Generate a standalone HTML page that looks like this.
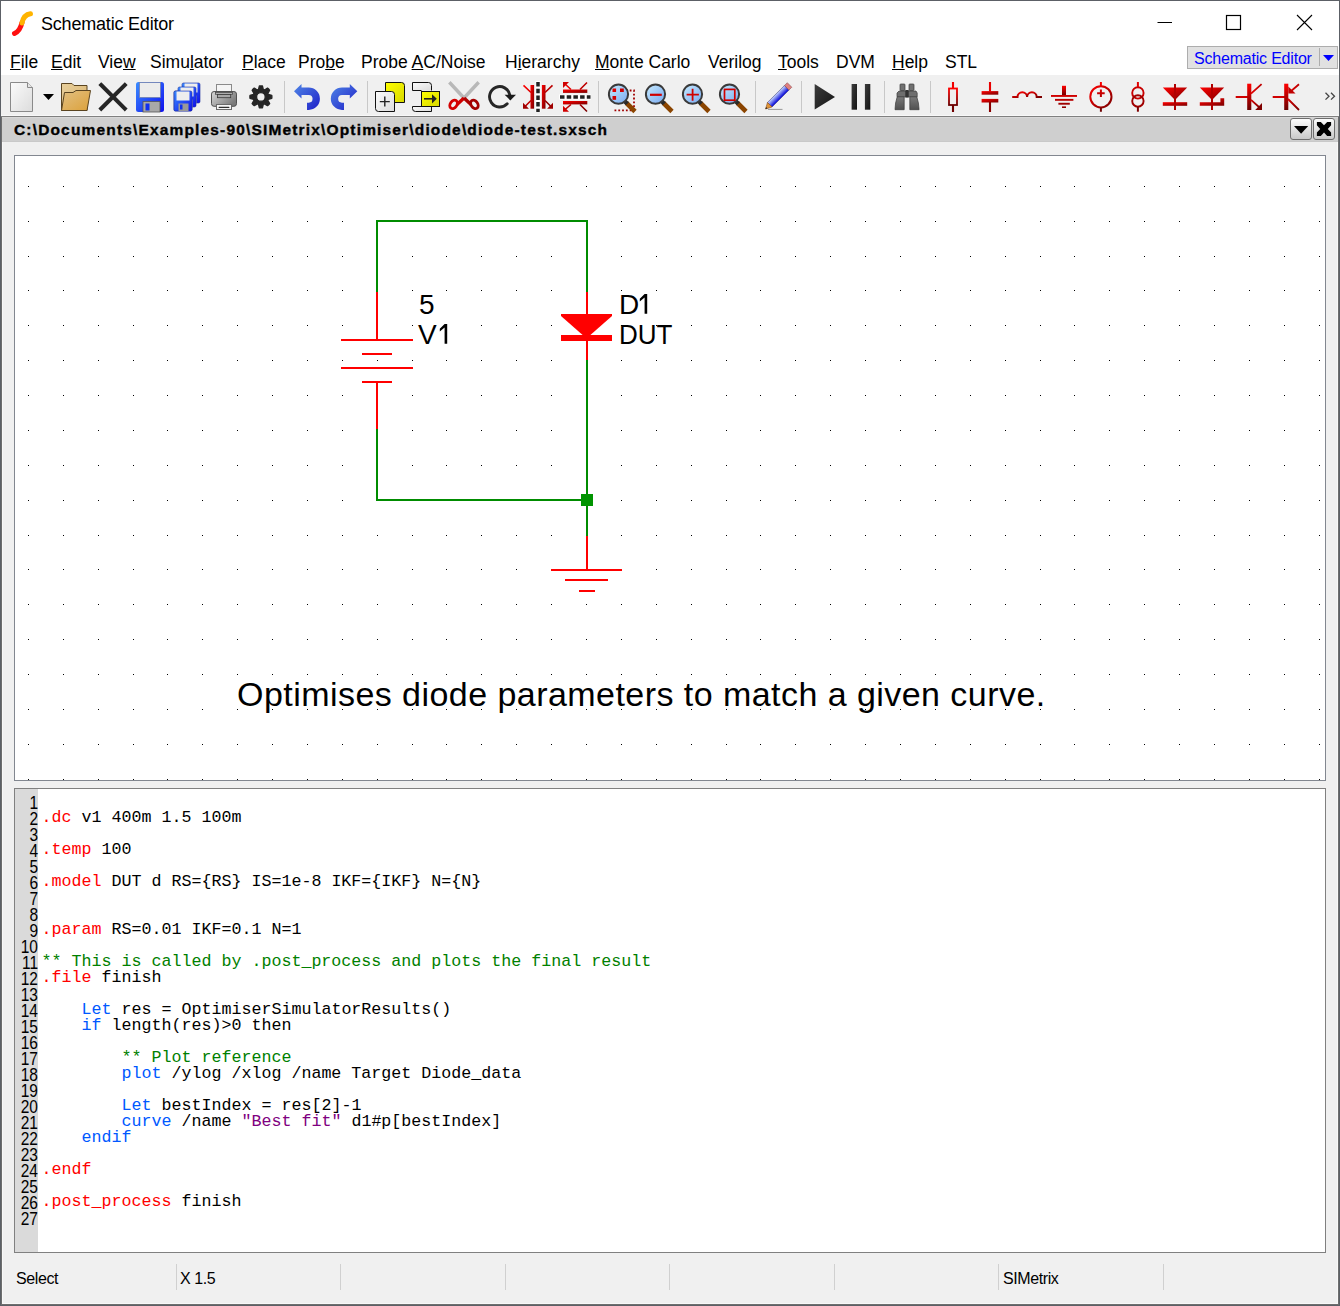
<!DOCTYPE html>
<html><head><meta charset="utf-8">
<style>
*{margin:0;padding:0;box-sizing:border-box}
html,body{width:1340px;height:1306px;overflow:hidden;background:#f0f0f0;font-family:"Liberation Sans",sans-serif;color:#000}
.abs{position:absolute}
#win{position:absolute;left:0;top:0;width:1340px;height:1306px;border:1px solid #5c6066}
#titlebar{left:1px;top:1px;width:1338px;height:74px;background:#fff}
.title{left:41px;top:13.5px;font-size:18px;letter-spacing:-0.2px;white-space:nowrap}
.menu{top:52px;font-size:17.5px;white-space:nowrap}
.menu u{text-decoration:underline;text-underline-offset:1px;text-decoration-thickness:1px}
#toolbar{left:1px;top:75px;width:1338px;height:40px;background:#f0f0f0}
#doctitle{left:2px;top:117px;width:1336px;height:25px;background:#cfcfcf;box-shadow:inset 0 1px 0 #d8d8d8, inset 0 -1px 0 #c9c9c9}
.px{position:absolute}
.dt{left:14px;top:120.5px;font-size:15.5px;letter-spacing:1.16px;font-weight:bold;-webkit-text-stroke:0.35px #000;white-space:nowrap}
#sch{left:14px;top:155px;width:1312px;height:626px;border:1px solid #828790;background:#fff}
#code{left:14px;top:788px;width:1312px;height:465px;border:1px solid #808080;background:#fff}
#gutter{left:15px;top:789px;width:23px;height:463px;background:#dadada}
.ln{position:absolute;left:15px;width:23px;text-align:right;font-size:15.5px;line-height:16px;transform:scaleY(1.2);transform-origin:0 100%}
.cl{position:absolute;left:41.5px;font-family:"Liberation Mono",monospace;font-size:16.67px;line-height:16px;white-space:pre}
.r{color:#ff0000}.b{color:#0058ff}.g{color:#008000}.p{color:#800080}
.st{top:1270px;font-size:16px;letter-spacing:-0.4px;white-space:nowrap}
.sep{position:absolute;top:1264px;width:1px;height:26px;background:#d0d0d0}
</style></head><body>
<div id="win"></div>
<div id="titlebar" class="abs"></div>
<svg class="abs" style="left:11.3px;top:7px" width="24" height="30" viewBox="0 0 24 30">
<path d="M3.5 26.5 C8 24.5 10 20 11 15.5" stroke="#ff1010" stroke-width="5" fill="none" stroke-linecap="round"/>
<path d="M11 16 C12 11 14 7.5 19.5 6.8" stroke="#ffb400" stroke-width="5" fill="none" stroke-linecap="round"/>
</svg>
<div class="abs title">Schematic Editor</div>
<svg class="abs" style="left:1140px;top:0" width="200" height="45">
<path d="M17.5 22.5h14.5" stroke="#000" stroke-width="1"/>
<rect x="86.5" y="15.5" width="14" height="14" stroke="#000" fill="none" stroke-width="1.2"/>
<path d="M157 15L172 30M172 15L157 30" stroke="#000" stroke-width="1.1"/>
</svg>
<div class="abs menu" style="left:10px"><u>F</u>ile</div>
<div class="abs menu" style="left:51px"><u>E</u>dit</div>
<div class="abs menu" style="left:98px">Vie<u>w</u></div>
<div class="abs menu" style="left:150px">Simu<u>l</u>ator</div>
<div class="abs menu" style="left:242px"><u>P</u>lace</div>
<div class="abs menu" style="left:298px">Pro<u>b</u>e</div>
<div class="abs menu" style="left:361px">Probe <u>A</u>C/Noise</div>
<div class="abs menu" style="left:505px">H<u>i</u>erarchy</div>
<div class="abs menu" style="left:595px"><u>M</u>onte Carlo</div>
<div class="abs menu" style="left:708px">Verilog</div>
<div class="abs menu" style="left:778px"><u>T</u>ools</div>
<div class="abs menu" style="left:836px">DVM</div>
<div class="abs menu" style="left:892px"><u>H</u>elp</div>
<div class="abs menu" style="left:945px">STL</div>
<div class="abs" style="left:1187px;top:46px;width:151px;height:23px;background:#e1e1e1;border:1px solid #adadad"></div>
<div class="abs" style="left:1194px;top:50px;font-size:16px;letter-spacing:-0.2px;color:#0000ff;white-space:nowrap">Schematic Editor</div>
<div class="abs" style="left:1319px;top:48px;width:1px;height:18px;background:#adadad"></div>
<svg class="abs" style="left:1322px;top:54px" width="14" height="9"><path d="M1 1h11l-5.5 6z" fill="#0000ff"/></svg>
<div id="toolbar" class="abs"></div>
<svg class="abs" style="left:0;top:76px" width="1340" height="40" viewBox="0 76 1340 40">
<defs>
<linearGradient id="gDoc" x1="0" y1="0" x2="1" y2="1"><stop offset="0" stop-color="#fbfbfb"/><stop offset="1" stop-color="#dcdcdc"/></linearGradient>
<linearGradient id="gFold" x1="0" y1="0" x2="1" y2="1"><stop offset="0" stop-color="#e8cf9c"/><stop offset="1" stop-color="#d9b46e"/></linearGradient>
<linearGradient id="gFoldF" x1="0" y1="0" x2="1" y2="1"><stop offset="0" stop-color="#e2c083"/><stop offset="1" stop-color="#dca13a"/></linearGradient>
<linearGradient id="gBlue" x1="0" y1="0" x2="1" y2="1"><stop offset="0" stop-color="#3a8dff"/><stop offset="1" stop-color="#1010ee"/></linearGradient>
<linearGradient id="gArrow" x1="0" y1="0" x2="1" y2="1"><stop offset="0" stop-color="#4f86e6"/><stop offset="1" stop-color="#1f1fc8"/></linearGradient>
<linearGradient id="gRed" x1="0" y1="0" x2="1" y2="1"><stop offset="0" stop-color="#ff0000"/><stop offset="1" stop-color="#7a0000"/></linearGradient>
<linearGradient id="gRedV" x1="0" y1="0" x2="0" y2="1"><stop offset="0" stop-color="#ff0000"/><stop offset="1" stop-color="#6a0000"/></linearGradient>
<linearGradient id="gLens" x1="0" y1="0" x2="1" y2="1"><stop offset="0" stop-color="#c8ecff"/><stop offset="1" stop-color="#78a8f0"/></linearGradient>
<linearGradient id="gGray" x1="0" y1="0" x2="1" y2="1"><stop offset="0" stop-color="#d0d0d0"/><stop offset="1" stop-color="#808080"/></linearGradient>
<linearGradient id="gYel" x1="0" y1="0" x2="1" y2="1"><stop offset="0" stop-color="#ffff00"/><stop offset="1" stop-color="#d8d800"/></linearGradient>
<linearGradient id="gPenBody" x1="0" y1="0" x2="0" y2="1"><stop offset="0" stop-color="#c8d8ff"/><stop offset="1" stop-color="#0000d8"/></linearGradient>
<linearGradient id="gDark" x1="0" y1="0" x2="1" y2="1"><stop offset="0" stop-color="#3c3c3c"/><stop offset="1" stop-color="#141414"/></linearGradient>
<linearGradient id="gBino" x1="0" y1="0" x2="0" y2="1"><stop offset="0" stop-color="#7a7a7a"/><stop offset="1" stop-color="#505050"/></linearGradient>
</defs>
<!-- new doc -->
<path d="M10.5 82.5H27.5L32.5 87.5V111.5H10.5Z" fill="url(#gDoc)" stroke="#8a8a8a" stroke-width="1"/>
<path d="M27.5 82.5V87.5H32.5" fill="#e6e6e6" stroke="#8a8a8a" stroke-width="1"/>
<path d="M43 94H54L48.5 100Z" fill="#000"/>
<!-- folder -->
<path d="M61.5 110.5V83.5H72L74 85.5H87V110.5Z" fill="url(#gFold)" stroke="#5a4420" stroke-width="1"/>
<path d="M61.5 110.5L64.5 92.5H73L76 90.5H90.5L87 110.5Z" fill="url(#gFoldF)" stroke="#5a4420" stroke-width="1"/>
<!-- X -->
<path d="M101.2 85L124.8 108.6M124.8 85L101.2 108.6" stroke="#262626" stroke-width="4" stroke-linecap="square"/>
<!-- save -->
<rect x="136" y="82" width="28" height="30" rx="2.5" fill="url(#gBlue)"/>
<rect x="139.5" y="82.5" width="21" height="15" fill="#ececec" stroke="#6f7fb0" stroke-width="0.8"/>
<rect x="143" y="101.5" width="17" height="10.5" fill="#a8a8a8" stroke="#555" stroke-width="0.8"/>
<rect x="145.5" y="103.5" width="4" height="7" fill="#1030f0"/>
<!-- save all -->
<g id="fl"><rect x="174" y="91" width="18" height="20" rx="1.5" fill="url(#gBlue)" stroke="#2030a0" stroke-width="0.6"/><rect x="176.5" y="91.5" width="13" height="9" fill="#eee"/><rect x="178.5" y="103.5" width="10" height="7.5" fill="#999"/><rect x="180" y="104.5" width="2.5" height="5" fill="#1030f0"/></g>
<use href="#fl" x="8" y="-8"/><use href="#fl" x="4" y="-4"/><use href="#fl"/>
<!-- printer -->
<linearGradient id="gPrn" x1="0" y1="0" x2="1" y2="0.6"><stop offset="0" stop-color="#d8d8d8"/><stop offset="1" stop-color="#7a7a7a"/></linearGradient>
<rect x="216.5" y="84.5" width="15" height="8" fill="#f4f4f4" stroke="#8a8a8a" stroke-width="1"/>
<rect x="211.5" y="91.5" width="25" height="14.8" rx="2.6" fill="url(#gPrn)" stroke="#505050" stroke-width="1"/>
<rect x="215.5" y="92.5" width="17" height="1.8" fill="#b8b8b8" stroke="#4a4a4a" stroke-width="0.8"/>
<rect x="217.5" y="94.5" width="13.2" height="3.2" fill="#a8a8a8" stroke="#3a3a3a" stroke-width="0.8"/>
<rect x="216.5" y="104.5" width="15" height="5" fill="#f6f6f6" stroke="#6a6a6a" stroke-width="1"/>
<rect x="218.6" y="106.7" width="10.8" height="1.3" rx="0.6" fill="#2e2e2e"/>
<!-- gear -->
<path d="M258.49 89.48L259.37 86.01A11.0 11.0 0 0 1 262.43 86.01L263.31 89.48A7.8 7.8 0 0 1 264.44 89.95L267.52 88.12A11.0 11.0 0 0 1 269.68 90.28L267.85 93.36A7.8 7.8 0 0 1 268.32 94.49L271.79 95.37A11.0 11.0 0 0 1 271.79 98.43L268.32 99.31A7.8 7.8 0 0 1 267.85 100.44L269.68 103.52A11.0 11.0 0 0 1 267.52 105.68L264.44 103.85A7.8 7.8 0 0 1 263.31 104.32L262.43 107.79A11.0 11.0 0 0 1 259.37 107.79L258.49 104.32A7.8 7.8 0 0 1 257.36 103.85L254.28 105.68A11.0 11.0 0 0 1 252.12 103.52L253.95 100.44A7.8 7.8 0 0 1 253.48 99.31L250.01 98.43A11.0 11.0 0 0 1 250.01 95.37L253.48 94.49A7.8 7.8 0 0 1 253.95 93.36L252.12 90.28A11.0 11.0 0 0 1 254.28 88.12L257.36 89.95A7.8 7.8 0 0 1 258.49 89.48ZM265.20 96.9A4.3 4.3 0 1 0 256.60 96.9A4.3 4.3 0 1 0 265.20 96.9Z" fill="#262626" fill-rule="evenodd" stroke="#262626" stroke-width="1.3" stroke-linejoin="round"/>
<rect x="284" y="81" width="1" height="32" fill="#c8c8c8"/>
<!-- undo redo -->
<path d="M294 91.2L301.5 84V87.5H308.7A11.2 11.2 0 0 1 308.7 109.9H307V102.7H308.7A3.85 3.85 0 0 0 308.7 95H301.5V98.4Z" fill="url(#gArrow)"/>
<path d="M357.3 91.2L349.8 84V87.5H342A11.2 11.2 0 0 0 342 109.9H344V102.7H342A3.85 3.85 0 0 1 342 95H349.8V98.4Z" fill="url(#gArrow)"/>
<rect x="367" y="81" width="1" height="32" fill="#c8c8c8"/>
<!-- add symbol -->
<path d="M385.5 82.5H401.5A3 3 0 0 1 404.5 85.5V102.5H385.5Z" fill="url(#gYel)" stroke="#111" stroke-width="1"/>
<path d="M375.5 91.5H391.5A3 3 0 0 1 394.5 94.5V111.5H378.5A3 3 0 0 1 375.5 108.5Z" fill="url(#gDoc)" stroke="#111" stroke-width="1"/>
<path d="M379.8 101.6H389.8M384.8 96.6V106.6" stroke="#222" stroke-width="1.4"/>
<!-- place/goto -->
<path d="M412.5 90.5V82.5H428.5A3 3 0 0 1 431.5 85.5V90.5" fill="url(#gDoc)" stroke="#111" stroke-width="1"/>
<path d="M412.5 90.5H421.5" stroke="#111" stroke-width="1"/>
<path d="M412.5 106.5V108.5A3 3 0 0 0 415.5 111.5H431.5V106.5Z" fill="url(#gDoc)" stroke="#111" stroke-width="1"/>
<rect x="421.5" y="91.5" width="18" height="15" fill="url(#gYel)" stroke="#111" stroke-width="1"/>
<path d="M424 98.8H433" stroke="#222" stroke-width="1.6"/>
<path d="M432 94.2L436.8 98.8L432 103.5Z" fill="#222"/>
<!-- scissors -->
<path d="M450.5 83.5L464 98M477.5 83.5L464 98" stroke="#b8b8b8" stroke-width="3.4" stroke-linecap="square"/>
<path d="M464 98L457 104.5" stroke="#d00000" stroke-width="3.4"/>
<path d="M464 98L471 104.5" stroke="#b00000" stroke-width="3.4"/>
<ellipse cx="453.6" cy="104.4" rx="3.3" ry="4.6" transform="rotate(35 453.6 104.4)" fill="none" stroke="#d40000" stroke-width="2.9"/>
<ellipse cx="474.4" cy="104.4" rx="3.3" ry="4.6" transform="rotate(-35 474.4 104.4)" fill="none" stroke="#a40000" stroke-width="2.9"/>
<!-- rotate -->
<path d="M507.2 103.8A10.2 10.2 0 1 1 509.8 95" fill="none" stroke="#262626" stroke-width="2.9" stroke-linecap="round"/>
<path d="M504.6 94.8L516 94.8L510.3 100.4Z" fill="#1a1a1a"/>
<!-- mirror LR -->
<rect x="535.5" y="81" width="5" height="31" fill="#fff"/>
<path d="M538 82V112" stroke="#222" stroke-width="3.5" stroke-dasharray="4.5 2.2"/>
<rect x="530.5" y="85" width="3.6" height="23.7" fill="url(#gRed)"/>
<rect x="541.9" y="85" width="3.6" height="23.7" fill="url(#gRed)"/>
<path d="M523.5 85.3L531 92.5M531 100.5L524.5 107M552.5 85.3L545 92.5M545 100.5L551.5 107" stroke="url(#gRed)" stroke-width="1.6"/>
<path d="M523 102.8V108.7H528.9L527 106.8L525 104.8Z M553 102.8V108.7H547.1L549 106.8L551 104.8Z" fill="#a00000"/>
<!-- mirror UD -->
<rect x="559" y="94.5" width="32" height="5" fill="#fff"/>
<path d="M560 97.1H590.5" stroke="#222" stroke-width="3.5" stroke-dasharray="4.5 2.2"/>
<rect x="563" y="89.5" width="24.3" height="3.4" fill="url(#gRed)"/>
<rect x="563" y="101" width="24.3" height="3.4" fill="url(#gRed)"/>
<path d="M564.5 83.5L571 89.5M587 82.5L580 89.5M564.5 110L571 104.5M587 111.5L580 104.5" stroke="url(#gRed)" stroke-width="1.6"/>
<path d="M563 82H569L567 84L565 86L563 88Z M563 111.7H569L567 109.7L565 107.7L563 105.7Z" fill="#d00000"/>
<rect x="598" y="81" width="1" height="32" fill="#c8c8c8"/>
<!-- zoom fit -->
<path d="M614.5 90.5H634V110.3H614.3" fill="none" stroke="#a00000" stroke-width="1.8" stroke-dasharray="1.8 2"/>
<g id="lens"><path d="M626.5 103L635 111.5" stroke="#8b4500" stroke-width="4.6" stroke-linecap="butt"/><path d="M624.5 101L627.3 103.8" stroke="#2a2a2a" stroke-width="4.4"/><circle cx="618.5" cy="94.2" r="9.6" fill="url(#gLens)" stroke="#3a3a3a" stroke-width="2"/></g>
<rect x="612.5" y="88.5" width="3.6" height="3.5" fill="#e00000"/><rect x="620" y="88.5" width="3.8" height="3.5" fill="#d00000"/><rect x="612.5" y="96" width="3.6" height="3.8" fill="#d00000"/>
<!-- zoom out -->
<use href="#lens" x="37"/>
<path d="M650 94.8H661.8" stroke="#d00000" stroke-width="2.2" stroke-linecap="butt"/>
<use href="#lens" x="74"/>
<path d="M686.6 94.6H698.9M692.6 88.7V100.7" stroke="#d00000" stroke-width="1.8"/>
<use href="#lens" x="111"/>
<rect x="724.5" y="89.4" width="10.3" height="10.8" fill="none" stroke="#d00000" stroke-width="1.7"/>
<rect x="755" y="81" width="1" height="32" fill="#c8c8c8"/>
<!-- pencil -->
<path d="M768 109.4H782.5" stroke="#999" stroke-width="1"/>
<g transform="translate(765.5 109) rotate(-45)">
<rect x="6" y="-3.2" width="24" height="6.4" fill="url(#gPenBody)" stroke="#303070" stroke-width="0.5"/>
<rect x="30" y="-3.2" width="4" height="6.4" fill="#e08080" stroke="#804040" stroke-width="0.5"/>
<path d="M0 0L6 -3.2V3.2Z" fill="#e0953a" stroke="#804010" stroke-width="0.5"/>
<path d="M0 0L1.8 -1V1Z" fill="#222"/>
</g>
<rect x="801" y="81" width="1" height="32" fill="#c8c8c8"/>
<!-- play pause -->
<path d="M814.7 84V109.6L835 97Z" fill="url(#gDark)"/>
<rect x="851.6" y="84" width="5.4" height="25.7" fill="url(#gDark)"/>
<rect x="864.9" y="84" width="5.4" height="25.7" fill="url(#gDark)"/>
<rect x="884" y="81" width="1" height="32" fill="#c8c8c8"/>
<!-- binoculars -->
<rect x="900" y="84" width="5" height="6.5" rx="0.8" fill="#707070" stroke="#3a3a3a" stroke-width="0.7"/>
<rect x="909" y="84" width="5" height="6.5" rx="0.8" fill="#707070" stroke="#3a3a3a" stroke-width="0.7"/>
<path d="M897 96.8V93L899 91H916L917.2 93V96.8Z" fill="#6e6e6e" stroke="#3a3a3a" stroke-width="0.7"/>
<path d="M897.2 96.8H904.2V109.7H895L895.6 103Z" fill="url(#gBino)" stroke="#3a3a3a" stroke-width="0.7"/>
<path d="M909.8 96.8H916.8L918.4 103L919.1 109.7H909.8Z" fill="url(#gBino)" stroke="#3a3a3a" stroke-width="0.7"/>
<rect x="905.3" y="90" width="3.4" height="7.6" rx="0.5" fill="#333"/>
<rect x="930" y="81" width="1" height="32" fill="#c8c8c8"/>
<!-- resistor -->
<path d="M953 82V88" stroke="#f00000" stroke-width="2.1"/><path d="M953 105V112" stroke="#700000" stroke-width="2.1"/>
<rect x="949" y="88.5" width="8" height="16.5" fill="none" stroke="url(#gRedV)" stroke-width="1.8"/>
<!-- cap -->
<path d="M990 82V91.5" stroke="#e80000" stroke-width="2.1"/><path d="M990 102V112" stroke="#880000" stroke-width="2.1"/>
<rect x="981.6" y="91.1" width="16.7" height="3.6" fill="url(#gRed)"/>
<rect x="981.6" y="98.9" width="16.7" height="3.6" fill="url(#gRed)"/>
<!-- inductor -->
<path d="M1012.2 97H1017.5A4.8 4.8 0 0 1 1027.1 97A4.8 4.8 0 0 1 1036.7 97H1042" fill="none" stroke="url(#gRed)" stroke-width="2"/>
<!-- ground -->
<rect x="1062" y="85.8" width="4" height="10" fill="url(#gRedV)"/>
<rect x="1051" y="95" width="26" height="1.9" fill="#d00000"/>
<rect x="1055" y="98.9" width="18.4" height="1.9" fill="#b80000"/>
<rect x="1058.4" y="102.8" width="11.4" height="1.9" fill="#a00000"/>
<rect x="1062" y="106.4" width="4" height="1.6" fill="#900000"/>
<!-- vsource -->
<circle cx="1100.9" cy="96.8" r="10.6" fill="none" stroke="url(#gRed)" stroke-width="2"/>
<path d="M1100.9 82V86.2M1100.9 107.4V111.7M1097.1 93.2H1104.7M1100.9 89.4V97" stroke="url(#gRedV)" stroke-width="2"/>
<!-- isource -->
<circle cx="1137.9" cy="92.9" r="5.7" fill="none" stroke="#c80000" stroke-width="1.9"/>
<circle cx="1137.9" cy="101" r="5.7" fill="none" stroke="#a00000" stroke-width="1.9"/>
<path d="M1137.9 82V87.2" stroke="#e00000" stroke-width="2"/><path d="M1137.9 106.7V111.7" stroke="#800000" stroke-width="2"/>
<!-- diode -->
<path d="M1162.8 87.6H1187.2L1175 100.1Z" fill="url(#gRed)"/>
<rect x="1162.8" y="102.2" width="24.4" height="3.6" fill="url(#gRed)"/>
<path d="M1175 84V110" stroke="#b00000" stroke-width="2"/>
<!-- zener -->
<path d="M1199.8 87.6H1224.2L1212 100.1Z" fill="url(#gRed)"/>
<path d="M1199.8 102.2H1220.4V98.3H1224.2V105.8H1199.8Z" fill="url(#gRed)"/>
<path d="M1212 84V110" stroke="#b00000" stroke-width="2"/>
<!-- npn -->
<path d="M1235.7 97H1248" stroke="#d00000" stroke-width="2"/>
<rect x="1247.2" y="83.7" width="4.1" height="26.3" fill="url(#gRedV)"/>
<path d="M1251 93.6L1261.6 84.2M1251 99.8L1259.5 107.5" stroke="url(#gRed)" stroke-width="1.8"/>
<path d="M1255.2 110H1262V103Z" fill="#800000"/>
<!-- pnp -->
<path d="M1272.7 97H1285" stroke="#d00000" stroke-width="2"/>
<rect x="1284.2" y="83.7" width="4.1" height="26.3" fill="url(#gRedV)"/>
<path d="M1290 92L1299 84.2M1288 99L1299 110" stroke="url(#gRed)" stroke-width="1.8"/>
<path d="M1288.3 93.5H1295.5L1288.3 86.5Z" fill="#c00000"/>
<!-- chevrons -->
<path d="M1325.5 92.8L1329 96.2L1325.5 99.6M1331 92.8L1334.5 96.2L1331 99.6" fill="none" stroke="#444" stroke-width="1.3"/>
</svg>

<div class="px" style="left:1px;top:115px;width:1338px;height:1px;background:#f8f8f8"></div>
<div class="px" style="left:1px;top:116px;width:1338px;height:1px;background:#808080"></div>
<div class="px" style="left:1px;top:117px;width:1px;height:1188px;background:#6e6e6e"></div>
<div class="px" style="left:1338px;top:117px;width:1px;height:1188px;background:#6e6e6e"></div>
<div class="px" style="left:1px;top:1304px;width:1338px;height:1px;background:#6e6e6e"></div>
<div class="px" style="left:2px;top:142px;width:1px;height:1162px;background:#f8f8f8"></div>
<div class="px" style="left:1337px;top:142px;width:1px;height:1162px;background:#f8f8f8"></div>
<div class="px" style="left:2px;top:1303px;width:1336px;height:1px;background:#f8f8f8"></div>
<div id="doctitle" class="abs"></div>
<div class="abs dt">C:\Documents\Examples-90\SIMetrix\Optimiser\diode\diode-test.sxsch</div>
<svg class="abs" style="left:1285px;top:115px" width="55" height="28" viewBox="1285 115 55 28">
<defs><linearGradient id="gBtn" x1="0" y1="0" x2="0" y2="1"><stop offset="0" stop-color="#fdfdfd"/><stop offset="1" stop-color="#c8c8c8"/></linearGradient></defs>
<rect x="1290.5" y="118.5" width="21" height="21" rx="2.5" fill="url(#gBtn)" stroke="#6e6e6e" stroke-width="1"/>
<rect x="1313.5" y="118.5" width="21" height="21" rx="2.5" fill="url(#gBtn)" stroke="#6e6e6e" stroke-width="1"/>
<path d="M1294 126H1308.2L1301.1 133.8Z" fill="#000"/>
<path d="M1316.9 121.9H1320.8L1324 125.2L1327.2 121.9H1331.1V125.2L1327.8 129L1331.1 132.6V136H1327.2L1324 132.6L1320.8 136H1316.9V132.6L1320.2 129L1316.9 125.2Z" fill="#000"/>
</svg>
<div id="sch" class="abs"></div>
<svg class="abs" style="left:15px;top:156px" width="1310" height="624" viewBox="15 156 1310 624" shape-rendering="crispEdges">
<path id="grid" d="M28 186h1v1h-1zM63 186h1v1h-1zM98 186h1v1h-1zM133 186h1v1h-1zM167 186h1v1h-1zM202 186h1v1h-1zM237 186h1v1h-1zM272 186h1v1h-1zM307 186h1v1h-1zM342 186h1v1h-1zM377 186h1v1h-1zM412 186h1v1h-1zM446 186h1v1h-1zM481 186h1v1h-1zM516 186h1v1h-1zM551 186h1v1h-1zM586 186h1v1h-1zM621 186h1v1h-1zM656 186h1v1h-1zM691 186h1v1h-1zM726 186h1v1h-1zM760 186h1v1h-1zM795 186h1v1h-1zM830 186h1v1h-1zM865 186h1v1h-1zM900 186h1v1h-1zM935 186h1v1h-1zM970 186h1v1h-1zM1005 186h1v1h-1zM1040 186h1v1h-1zM1074 186h1v1h-1zM1109 186h1v1h-1zM1144 186h1v1h-1zM1179 186h1v1h-1zM1214 186h1v1h-1zM1249 186h1v1h-1zM1284 186h1v1h-1zM1319 186h1v1h-1zM28 221h1v1h-1zM63 221h1v1h-1zM98 221h1v1h-1zM133 221h1v1h-1zM167 221h1v1h-1zM202 221h1v1h-1zM237 221h1v1h-1zM272 221h1v1h-1zM307 221h1v1h-1zM342 221h1v1h-1zM377 221h1v1h-1zM412 221h1v1h-1zM446 221h1v1h-1zM481 221h1v1h-1zM516 221h1v1h-1zM551 221h1v1h-1zM586 221h1v1h-1zM621 221h1v1h-1zM656 221h1v1h-1zM691 221h1v1h-1zM726 221h1v1h-1zM760 221h1v1h-1zM795 221h1v1h-1zM830 221h1v1h-1zM865 221h1v1h-1zM900 221h1v1h-1zM935 221h1v1h-1zM970 221h1v1h-1zM1005 221h1v1h-1zM1040 221h1v1h-1zM1074 221h1v1h-1zM1109 221h1v1h-1zM1144 221h1v1h-1zM1179 221h1v1h-1zM1214 221h1v1h-1zM1249 221h1v1h-1zM1284 221h1v1h-1zM1319 221h1v1h-1zM28 256h1v1h-1zM63 256h1v1h-1zM98 256h1v1h-1zM133 256h1v1h-1zM167 256h1v1h-1zM202 256h1v1h-1zM237 256h1v1h-1zM272 256h1v1h-1zM307 256h1v1h-1zM342 256h1v1h-1zM377 256h1v1h-1zM412 256h1v1h-1zM446 256h1v1h-1zM481 256h1v1h-1zM516 256h1v1h-1zM551 256h1v1h-1zM586 256h1v1h-1zM621 256h1v1h-1zM656 256h1v1h-1zM691 256h1v1h-1zM726 256h1v1h-1zM760 256h1v1h-1zM795 256h1v1h-1zM830 256h1v1h-1zM865 256h1v1h-1zM900 256h1v1h-1zM935 256h1v1h-1zM970 256h1v1h-1zM1005 256h1v1h-1zM1040 256h1v1h-1zM1074 256h1v1h-1zM1109 256h1v1h-1zM1144 256h1v1h-1zM1179 256h1v1h-1zM1214 256h1v1h-1zM1249 256h1v1h-1zM1284 256h1v1h-1zM1319 256h1v1h-1zM28 290h1v1h-1zM63 290h1v1h-1zM98 290h1v1h-1zM133 290h1v1h-1zM167 290h1v1h-1zM202 290h1v1h-1zM237 290h1v1h-1zM272 290h1v1h-1zM307 290h1v1h-1zM342 290h1v1h-1zM377 290h1v1h-1zM412 290h1v1h-1zM446 290h1v1h-1zM481 290h1v1h-1zM516 290h1v1h-1zM551 290h1v1h-1zM586 290h1v1h-1zM621 290h1v1h-1zM656 290h1v1h-1zM691 290h1v1h-1zM726 290h1v1h-1zM760 290h1v1h-1zM795 290h1v1h-1zM830 290h1v1h-1zM865 290h1v1h-1zM900 290h1v1h-1zM935 290h1v1h-1zM970 290h1v1h-1zM1005 290h1v1h-1zM1040 290h1v1h-1zM1074 290h1v1h-1zM1109 290h1v1h-1zM1144 290h1v1h-1zM1179 290h1v1h-1zM1214 290h1v1h-1zM1249 290h1v1h-1zM1284 290h1v1h-1zM1319 290h1v1h-1zM28 325h1v1h-1zM63 325h1v1h-1zM98 325h1v1h-1zM133 325h1v1h-1zM167 325h1v1h-1zM202 325h1v1h-1zM237 325h1v1h-1zM272 325h1v1h-1zM307 325h1v1h-1zM342 325h1v1h-1zM377 325h1v1h-1zM412 325h1v1h-1zM446 325h1v1h-1zM481 325h1v1h-1zM516 325h1v1h-1zM551 325h1v1h-1zM586 325h1v1h-1zM621 325h1v1h-1zM656 325h1v1h-1zM691 325h1v1h-1zM726 325h1v1h-1zM760 325h1v1h-1zM795 325h1v1h-1zM830 325h1v1h-1zM865 325h1v1h-1zM900 325h1v1h-1zM935 325h1v1h-1zM970 325h1v1h-1zM1005 325h1v1h-1zM1040 325h1v1h-1zM1074 325h1v1h-1zM1109 325h1v1h-1zM1144 325h1v1h-1zM1179 325h1v1h-1zM1214 325h1v1h-1zM1249 325h1v1h-1zM1284 325h1v1h-1zM1319 325h1v1h-1zM28 360h1v1h-1zM63 360h1v1h-1zM98 360h1v1h-1zM133 360h1v1h-1zM167 360h1v1h-1zM202 360h1v1h-1zM237 360h1v1h-1zM272 360h1v1h-1zM307 360h1v1h-1zM342 360h1v1h-1zM377 360h1v1h-1zM412 360h1v1h-1zM446 360h1v1h-1zM481 360h1v1h-1zM516 360h1v1h-1zM551 360h1v1h-1zM586 360h1v1h-1zM621 360h1v1h-1zM656 360h1v1h-1zM691 360h1v1h-1zM726 360h1v1h-1zM760 360h1v1h-1zM795 360h1v1h-1zM830 360h1v1h-1zM865 360h1v1h-1zM900 360h1v1h-1zM935 360h1v1h-1zM970 360h1v1h-1zM1005 360h1v1h-1zM1040 360h1v1h-1zM1074 360h1v1h-1zM1109 360h1v1h-1zM1144 360h1v1h-1zM1179 360h1v1h-1zM1214 360h1v1h-1zM1249 360h1v1h-1zM1284 360h1v1h-1zM1319 360h1v1h-1zM28 395h1v1h-1zM63 395h1v1h-1zM98 395h1v1h-1zM133 395h1v1h-1zM167 395h1v1h-1zM202 395h1v1h-1zM237 395h1v1h-1zM272 395h1v1h-1zM307 395h1v1h-1zM342 395h1v1h-1zM377 395h1v1h-1zM412 395h1v1h-1zM446 395h1v1h-1zM481 395h1v1h-1zM516 395h1v1h-1zM551 395h1v1h-1zM586 395h1v1h-1zM621 395h1v1h-1zM656 395h1v1h-1zM691 395h1v1h-1zM726 395h1v1h-1zM760 395h1v1h-1zM795 395h1v1h-1zM830 395h1v1h-1zM865 395h1v1h-1zM900 395h1v1h-1zM935 395h1v1h-1zM970 395h1v1h-1zM1005 395h1v1h-1zM1040 395h1v1h-1zM1074 395h1v1h-1zM1109 395h1v1h-1zM1144 395h1v1h-1zM1179 395h1v1h-1zM1214 395h1v1h-1zM1249 395h1v1h-1zM1284 395h1v1h-1zM1319 395h1v1h-1zM28 430h1v1h-1zM63 430h1v1h-1zM98 430h1v1h-1zM133 430h1v1h-1zM167 430h1v1h-1zM202 430h1v1h-1zM237 430h1v1h-1zM272 430h1v1h-1zM307 430h1v1h-1zM342 430h1v1h-1zM377 430h1v1h-1zM412 430h1v1h-1zM446 430h1v1h-1zM481 430h1v1h-1zM516 430h1v1h-1zM551 430h1v1h-1zM586 430h1v1h-1zM621 430h1v1h-1zM656 430h1v1h-1zM691 430h1v1h-1zM726 430h1v1h-1zM760 430h1v1h-1zM795 430h1v1h-1zM830 430h1v1h-1zM865 430h1v1h-1zM900 430h1v1h-1zM935 430h1v1h-1zM970 430h1v1h-1zM1005 430h1v1h-1zM1040 430h1v1h-1zM1074 430h1v1h-1zM1109 430h1v1h-1zM1144 430h1v1h-1zM1179 430h1v1h-1zM1214 430h1v1h-1zM1249 430h1v1h-1zM1284 430h1v1h-1zM1319 430h1v1h-1zM28 465h1v1h-1zM63 465h1v1h-1zM98 465h1v1h-1zM133 465h1v1h-1zM167 465h1v1h-1zM202 465h1v1h-1zM237 465h1v1h-1zM272 465h1v1h-1zM307 465h1v1h-1zM342 465h1v1h-1zM377 465h1v1h-1zM412 465h1v1h-1zM446 465h1v1h-1zM481 465h1v1h-1zM516 465h1v1h-1zM551 465h1v1h-1zM586 465h1v1h-1zM621 465h1v1h-1zM656 465h1v1h-1zM691 465h1v1h-1zM726 465h1v1h-1zM760 465h1v1h-1zM795 465h1v1h-1zM830 465h1v1h-1zM865 465h1v1h-1zM900 465h1v1h-1zM935 465h1v1h-1zM970 465h1v1h-1zM1005 465h1v1h-1zM1040 465h1v1h-1zM1074 465h1v1h-1zM1109 465h1v1h-1zM1144 465h1v1h-1zM1179 465h1v1h-1zM1214 465h1v1h-1zM1249 465h1v1h-1zM1284 465h1v1h-1zM1319 465h1v1h-1zM28 500h1v1h-1zM63 500h1v1h-1zM98 500h1v1h-1zM133 500h1v1h-1zM167 500h1v1h-1zM202 500h1v1h-1zM237 500h1v1h-1zM272 500h1v1h-1zM307 500h1v1h-1zM342 500h1v1h-1zM377 500h1v1h-1zM412 500h1v1h-1zM446 500h1v1h-1zM481 500h1v1h-1zM516 500h1v1h-1zM551 500h1v1h-1zM586 500h1v1h-1zM621 500h1v1h-1zM656 500h1v1h-1zM691 500h1v1h-1zM726 500h1v1h-1zM760 500h1v1h-1zM795 500h1v1h-1zM830 500h1v1h-1zM865 500h1v1h-1zM900 500h1v1h-1zM935 500h1v1h-1zM970 500h1v1h-1zM1005 500h1v1h-1zM1040 500h1v1h-1zM1074 500h1v1h-1zM1109 500h1v1h-1zM1144 500h1v1h-1zM1179 500h1v1h-1zM1214 500h1v1h-1zM1249 500h1v1h-1zM1284 500h1v1h-1zM1319 500h1v1h-1zM28 535h1v1h-1zM63 535h1v1h-1zM98 535h1v1h-1zM133 535h1v1h-1zM167 535h1v1h-1zM202 535h1v1h-1zM237 535h1v1h-1zM272 535h1v1h-1zM307 535h1v1h-1zM342 535h1v1h-1zM377 535h1v1h-1zM412 535h1v1h-1zM446 535h1v1h-1zM481 535h1v1h-1zM516 535h1v1h-1zM551 535h1v1h-1zM586 535h1v1h-1zM621 535h1v1h-1zM656 535h1v1h-1zM691 535h1v1h-1zM726 535h1v1h-1zM760 535h1v1h-1zM795 535h1v1h-1zM830 535h1v1h-1zM865 535h1v1h-1zM900 535h1v1h-1zM935 535h1v1h-1zM970 535h1v1h-1zM1005 535h1v1h-1zM1040 535h1v1h-1zM1074 535h1v1h-1zM1109 535h1v1h-1zM1144 535h1v1h-1zM1179 535h1v1h-1zM1214 535h1v1h-1zM1249 535h1v1h-1zM1284 535h1v1h-1zM1319 535h1v1h-1zM28 569h1v1h-1zM63 569h1v1h-1zM98 569h1v1h-1zM133 569h1v1h-1zM167 569h1v1h-1zM202 569h1v1h-1zM237 569h1v1h-1zM272 569h1v1h-1zM307 569h1v1h-1zM342 569h1v1h-1zM377 569h1v1h-1zM412 569h1v1h-1zM446 569h1v1h-1zM481 569h1v1h-1zM516 569h1v1h-1zM551 569h1v1h-1zM586 569h1v1h-1zM621 569h1v1h-1zM656 569h1v1h-1zM691 569h1v1h-1zM726 569h1v1h-1zM760 569h1v1h-1zM795 569h1v1h-1zM830 569h1v1h-1zM865 569h1v1h-1zM900 569h1v1h-1zM935 569h1v1h-1zM970 569h1v1h-1zM1005 569h1v1h-1zM1040 569h1v1h-1zM1074 569h1v1h-1zM1109 569h1v1h-1zM1144 569h1v1h-1zM1179 569h1v1h-1zM1214 569h1v1h-1zM1249 569h1v1h-1zM1284 569h1v1h-1zM1319 569h1v1h-1zM28 604h1v1h-1zM63 604h1v1h-1zM98 604h1v1h-1zM133 604h1v1h-1zM167 604h1v1h-1zM202 604h1v1h-1zM237 604h1v1h-1zM272 604h1v1h-1zM307 604h1v1h-1zM342 604h1v1h-1zM377 604h1v1h-1zM412 604h1v1h-1zM446 604h1v1h-1zM481 604h1v1h-1zM516 604h1v1h-1zM551 604h1v1h-1zM586 604h1v1h-1zM621 604h1v1h-1zM656 604h1v1h-1zM691 604h1v1h-1zM726 604h1v1h-1zM760 604h1v1h-1zM795 604h1v1h-1zM830 604h1v1h-1zM865 604h1v1h-1zM900 604h1v1h-1zM935 604h1v1h-1zM970 604h1v1h-1zM1005 604h1v1h-1zM1040 604h1v1h-1zM1074 604h1v1h-1zM1109 604h1v1h-1zM1144 604h1v1h-1zM1179 604h1v1h-1zM1214 604h1v1h-1zM1249 604h1v1h-1zM1284 604h1v1h-1zM1319 604h1v1h-1zM28 639h1v1h-1zM63 639h1v1h-1zM98 639h1v1h-1zM133 639h1v1h-1zM167 639h1v1h-1zM202 639h1v1h-1zM237 639h1v1h-1zM272 639h1v1h-1zM307 639h1v1h-1zM342 639h1v1h-1zM377 639h1v1h-1zM412 639h1v1h-1zM446 639h1v1h-1zM481 639h1v1h-1zM516 639h1v1h-1zM551 639h1v1h-1zM586 639h1v1h-1zM621 639h1v1h-1zM656 639h1v1h-1zM691 639h1v1h-1zM726 639h1v1h-1zM760 639h1v1h-1zM795 639h1v1h-1zM830 639h1v1h-1zM865 639h1v1h-1zM900 639h1v1h-1zM935 639h1v1h-1zM970 639h1v1h-1zM1005 639h1v1h-1zM1040 639h1v1h-1zM1074 639h1v1h-1zM1109 639h1v1h-1zM1144 639h1v1h-1zM1179 639h1v1h-1zM1214 639h1v1h-1zM1249 639h1v1h-1zM1284 639h1v1h-1zM1319 639h1v1h-1zM28 674h1v1h-1zM63 674h1v1h-1zM98 674h1v1h-1zM133 674h1v1h-1zM167 674h1v1h-1zM202 674h1v1h-1zM237 674h1v1h-1zM272 674h1v1h-1zM307 674h1v1h-1zM342 674h1v1h-1zM377 674h1v1h-1zM412 674h1v1h-1zM446 674h1v1h-1zM481 674h1v1h-1zM516 674h1v1h-1zM551 674h1v1h-1zM586 674h1v1h-1zM621 674h1v1h-1zM656 674h1v1h-1zM691 674h1v1h-1zM726 674h1v1h-1zM760 674h1v1h-1zM795 674h1v1h-1zM830 674h1v1h-1zM865 674h1v1h-1zM900 674h1v1h-1zM935 674h1v1h-1zM970 674h1v1h-1zM1005 674h1v1h-1zM1040 674h1v1h-1zM1074 674h1v1h-1zM1109 674h1v1h-1zM1144 674h1v1h-1zM1179 674h1v1h-1zM1214 674h1v1h-1zM1249 674h1v1h-1zM1284 674h1v1h-1zM1319 674h1v1h-1zM28 709h1v1h-1zM63 709h1v1h-1zM98 709h1v1h-1zM133 709h1v1h-1zM167 709h1v1h-1zM202 709h1v1h-1zM237 709h1v1h-1zM272 709h1v1h-1zM307 709h1v1h-1zM342 709h1v1h-1zM377 709h1v1h-1zM412 709h1v1h-1zM446 709h1v1h-1zM481 709h1v1h-1zM516 709h1v1h-1zM551 709h1v1h-1zM586 709h1v1h-1zM621 709h1v1h-1zM656 709h1v1h-1zM691 709h1v1h-1zM726 709h1v1h-1zM760 709h1v1h-1zM795 709h1v1h-1zM830 709h1v1h-1zM865 709h1v1h-1zM900 709h1v1h-1zM935 709h1v1h-1zM970 709h1v1h-1zM1005 709h1v1h-1zM1040 709h1v1h-1zM1074 709h1v1h-1zM1109 709h1v1h-1zM1144 709h1v1h-1zM1179 709h1v1h-1zM1214 709h1v1h-1zM1249 709h1v1h-1zM1284 709h1v1h-1zM1319 709h1v1h-1zM28 744h1v1h-1zM63 744h1v1h-1zM98 744h1v1h-1zM133 744h1v1h-1zM167 744h1v1h-1zM202 744h1v1h-1zM237 744h1v1h-1zM272 744h1v1h-1zM307 744h1v1h-1zM342 744h1v1h-1zM377 744h1v1h-1zM412 744h1v1h-1zM446 744h1v1h-1zM481 744h1v1h-1zM516 744h1v1h-1zM551 744h1v1h-1zM586 744h1v1h-1zM621 744h1v1h-1zM656 744h1v1h-1zM691 744h1v1h-1zM726 744h1v1h-1zM760 744h1v1h-1zM795 744h1v1h-1zM830 744h1v1h-1zM865 744h1v1h-1zM900 744h1v1h-1zM935 744h1v1h-1zM970 744h1v1h-1zM1005 744h1v1h-1zM1040 744h1v1h-1zM1074 744h1v1h-1zM1109 744h1v1h-1zM1144 744h1v1h-1zM1179 744h1v1h-1zM1214 744h1v1h-1zM1249 744h1v1h-1zM1284 744h1v1h-1zM1319 744h1v1h-1zM28 779h1v1h-1zM63 779h1v1h-1zM98 779h1v1h-1zM133 779h1v1h-1zM167 779h1v1h-1zM202 779h1v1h-1zM237 779h1v1h-1zM272 779h1v1h-1zM307 779h1v1h-1zM342 779h1v1h-1zM377 779h1v1h-1zM412 779h1v1h-1zM446 779h1v1h-1zM481 779h1v1h-1zM516 779h1v1h-1zM551 779h1v1h-1zM586 779h1v1h-1zM621 779h1v1h-1zM656 779h1v1h-1zM691 779h1v1h-1zM726 779h1v1h-1zM760 779h1v1h-1zM795 779h1v1h-1zM830 779h1v1h-1zM865 779h1v1h-1zM900 779h1v1h-1zM935 779h1v1h-1zM970 779h1v1h-1zM1005 779h1v1h-1zM1040 779h1v1h-1zM1074 779h1v1h-1zM1109 779h1v1h-1zM1144 779h1v1h-1zM1179 779h1v1h-1zM1214 779h1v1h-1zM1249 779h1v1h-1zM1284 779h1v1h-1zM1319 779h1v1h-1z" fill="#000"/>

<g id="wires" shape-rendering="crispEdges">
<rect x="376" y="220" width="2" height="72" fill="#008c00"/>
<rect x="376" y="220" width="212" height="2" fill="#008c00"/>
<rect x="586" y="220" width="2" height="72" fill="#008c00"/>
<rect x="376" y="429" width="2" height="72" fill="#008c00"/>
<rect x="376" y="499" width="212" height="2" fill="#008c00"/>
<rect x="586" y="360" width="2" height="176" fill="#008c00"/>
<rect x="581" y="494" width="12" height="12" fill="#009400"/>
<rect x="376" y="292" width="2" height="49" fill="#ff0000"/>
<rect x="341" y="339" width="72" height="2" fill="#ff0000"/>
<rect x="362" y="353" width="30" height="2" fill="#ff0000"/>
<rect x="341" y="367" width="72" height="2" fill="#ff0000"/>
<rect x="362" y="381" width="30" height="2" fill="#ff0000"/>
<rect x="376" y="381" width="2" height="48" fill="#ff0000"/>
<rect x="586" y="292" width="2" height="23" fill="#ff0000"/>
<rect x="561" y="335" width="51" height="6" fill="#ff0000"/>
<rect x="586" y="340" width="2" height="20" fill="#ff0000"/>
<rect x="586" y="536" width="2" height="35" fill="#ff0000"/>
<rect x="551" y="569" width="71" height="2" fill="#ff0000"/>
<rect x="565" y="579" width="43" height="2" fill="#ff0000"/>
<rect x="579" y="590" width="16" height="2" fill="#ff0000"/>
<path d="M561 314H612V316L589.8 335.5H583.2L561 316Z" fill="#ff0000" shape-rendering="auto"/>
</g>
<g font-family="Liberation Sans" font-size="28" fill="#000" shape-rendering="auto">
<text x="419" y="313.5">5</text>
<text x="418" y="343.5">V</text>
<text x="619" y="313.5">D</text>
<path id="one" d="M644.6 294H647.2V313.8H644.6V297.6L639.8 301.4V298.7Z"/>
<use href="#one" x="-200" y="30"/>
<text transform="translate(619 343.5) scale(0.93 1)">DUT</text>
<text x="237" y="705.5" font-size="34" letter-spacing="0.45">Optimises diode parameters to match a given curve.</text>
</g>

</svg>
<div id="code" class="abs"></div>
<div id="gutter" class="abs"></div>
<div class="ln" style="top:797px">1</div>
<div class="ln" style="top:813px">2</div>
<div class="cl" style="top:810px"><span class="r">.dc</span> v1 400m 1.5 100m</div>
<div class="ln" style="top:829px">3</div>
<div class="ln" style="top:845px">4</div>
<div class="cl" style="top:842px"><span class="r">.temp</span> 100</div>
<div class="ln" style="top:861px">5</div>
<div class="ln" style="top:877px">6</div>
<div class="cl" style="top:874px"><span class="r">.model</span> DUT d RS={RS} IS=1e-8 IKF={IKF} N={N}</div>
<div class="ln" style="top:893px">7</div>
<div class="ln" style="top:909px">8</div>
<div class="ln" style="top:925px">9</div>
<div class="cl" style="top:922px"><span class="r">.param</span> RS=0.01 IKF=0.1 N=1</div>
<div class="ln" style="top:941px">10</div>
<div class="ln" style="top:957px">11</div>
<div class="cl" style="top:954px"><span class="g">** This is called by .post_process and plots the final result</span></div>
<div class="ln" style="top:973px">12</div>
<div class="cl" style="top:970px"><span class="r">.file</span> finish</div>
<div class="ln" style="top:989px">13</div>
<div class="ln" style="top:1005px">14</div>
<div class="cl" style="top:1002px">    <span class="b">Let</span> res = OptimiserSimulatorResults()</div>
<div class="ln" style="top:1021px">15</div>
<div class="cl" style="top:1018px">    <span class="b">if</span> length(res)&gt;0 then</div>
<div class="ln" style="top:1037px">16</div>
<div class="ln" style="top:1053px">17</div>
<div class="cl" style="top:1050px">        <span class="g">** Plot reference</span></div>
<div class="ln" style="top:1069px">18</div>
<div class="cl" style="top:1066px">        <span class="b">plot</span> /ylog /xlog /name Target Diode_data</div>
<div class="ln" style="top:1085px">19</div>
<div class="ln" style="top:1101px">20</div>
<div class="cl" style="top:1098px">        <span class="b">Let</span> bestIndex = res[2]-1</div>
<div class="ln" style="top:1117px">21</div>
<div class="cl" style="top:1114px">        <span class="b">curve</span> /name <span class="p">"Best fit"</span> d1#p[bestIndex]</div>
<div class="ln" style="top:1133px">22</div>
<div class="cl" style="top:1130px">    <span class="b">endif</span></div>
<div class="ln" style="top:1149px">23</div>
<div class="ln" style="top:1165px">24</div>
<div class="cl" style="top:1162px"><span class="r">.endf</span></div>
<div class="ln" style="top:1181px">25</div>
<div class="ln" style="top:1197px">26</div>
<div class="cl" style="top:1194px"><span class="r">.post_process</span> finish</div>
<div class="ln" style="top:1213px">27</div>
<div class="abs st" style="left:16px">Select</div>
<div class="sep" style="left:176px"></div>
<div class="abs st" style="left:180px">X 1.5</div>
<div class="sep" style="left:340px"></div>
<div class="sep" style="left:505px"></div>
<div class="sep" style="left:669px"></div>
<div class="sep" style="left:834px"></div>
<div class="sep" style="left:998px"></div>
<div class="abs st" style="left:1003px">SIMetrix</div>
<div class="sep" style="left:1163px"></div>
</body></html>
